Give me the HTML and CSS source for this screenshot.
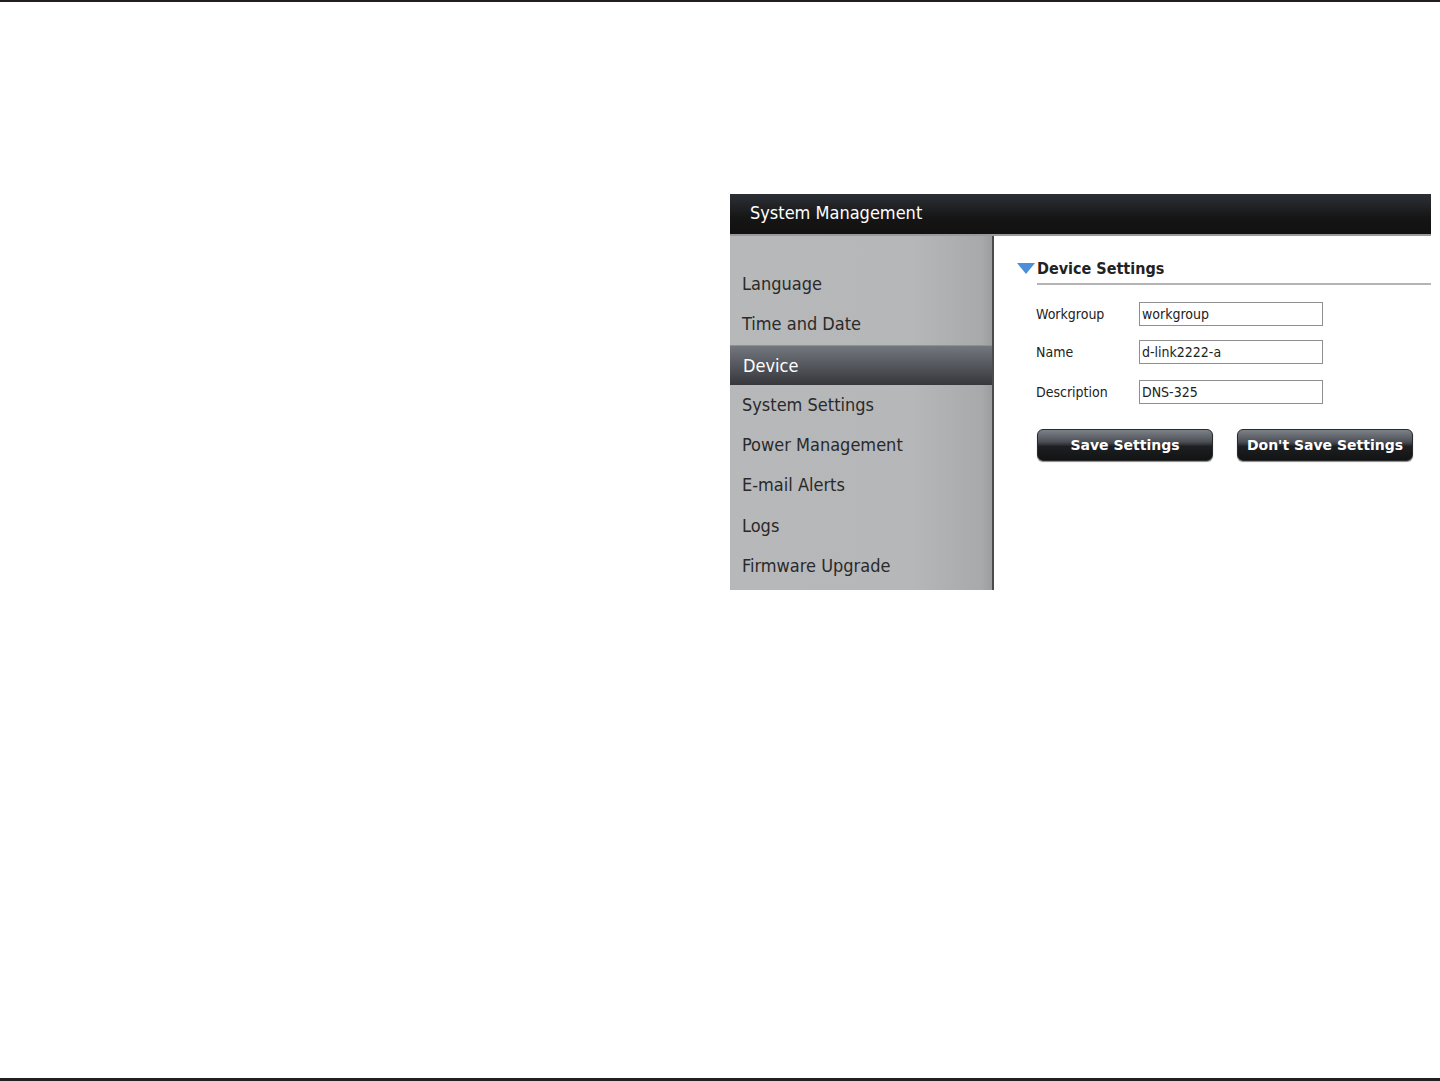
FILE: index.html
```html
<!DOCTYPE html>
<html lang="en">
<head>
    <meta charset="UTF-8">
    <title>System Management</title>
    <link rel="stylesheet" href="styles.css">
</head>
<body>
    <div class="page">
        <div class="panel">
            <div class="panel-header">System Management</div>
            <div class="panel-body">
                <ul class="side-menu">
                    <li>Language</li>
                    <li>Time and Date</li>
                    <li class="active">Device</li>
                    <li>System Settings</li>
                    <li>Power Management</li>
                    <li>E-mail Alerts</li>
                    <li>Logs</li>
                    <li>Firmware Upgrade</li>
                </ul>
                <div class="content">
                    <div class="section-title">
                        <span class="arrow"></span>
                        <span>Device Settings</span>
                    </div>
                    <div class="form">
                        <div class="form-row">
                            <label>Workgroup</label>
                            <input type="text" value="workgroup">
                        </div>
                        <div class="form-row">
                            <label>Name</label>
                            <input type="text" value="d-link2222-a">
                        </div>
                        <div class="form-row">
                            <label>Description</label>
                            <input type="text" value="DNS-325">
                        </div>
                    </div>
                    <div class="buttons">
                        <button class="btn">Save Settings</button>
                        <button class="btn">Don't Save Settings</button>
                    </div>
                </div>
            </div>
        </div>
    </div>
</body>
</html>
```
FILE: styles.css
```css
html, body {
    margin: 0;
    padding: 0;
}

body {
    font-family: Tahoma, "DejaVu Sans", sans-serif;
    background: #fff;
    width: 1440px;
    height: 1081px;
    overflow: hidden;
}

.page {
    height: 1081px;
    box-sizing: border-box;
    border-top: 2px solid #231f20;
    border-bottom: 3px solid #231f20;
    padding-top: 192px;
}

.panel {
    margin-left: 730px;
    width: 701px;
}

.panel-header {
    height: 40px;
    line-height: 38px;
    background: linear-gradient(#2c3036, #151515 60%, #111);
    border-bottom: 2px solid #9a9a9a;
    color: #fff;
    font-family: "DejaVu Sans Condensed", "DejaVu Sans", sans-serif;
    font-size: 18px;
    padding-left: 20px;
}

.panel-body {
    display: flex;
}

.side-menu {
    list-style: none;
    margin: 0;
    padding: 28px 0 4px 0;
    width: 262px;
    background: linear-gradient(to right, #b7b8ba, #b6b7b9 70%, #a8a9ab 96%, #9c9d9f);
    border-right: 2px solid #4a4b4d;
}

.side-menu li {
    height: 40.3px;
    line-height: 40px;
    padding-left: 12px;
    font-family: "DejaVu Sans Condensed", "DejaVu Sans", sans-serif;
    font-size: 18px;
    color: #2a2a2a;
}

.side-menu li.active {
    background: linear-gradient(#73777e, #54575d 50%, #36373c);
    border-top: 1px solid #8d9096;
    color: #fff;
    height: 39.3px;
    line-height: 39px;
    padding-left: 13px;
}

.content {
    flex: 1;
    padding: 21px 0 0 25px;
}

.section-title {
    display: flex;
    align-items: center;
    font-family: "DejaVu Sans Condensed", "DejaVu Sans", sans-serif;
    font-weight: bold;
    font-size: 16px;
    color: #222;
    height: 22px;
    padding-bottom: 4px;
    margin-left: -2px;
}

.arrow {
    width: 0;
    height: 0;
    border-left: 9px solid transparent;
    border-right: 9px solid transparent;
    border-top: 11px solid #4a8fd8;
    margin-right: 2px;
}

.form {
    margin-left: 18px;
    border-top: 2px solid #b4b4b4;
    padding-top: 17px;
}

.form-row {
    display: flex;
    align-items: center;
    height: 24px;
    margin-bottom: 14px;
    margin-left: -1px;
}

.form-row:nth-child(2) {
    margin-bottom: 16px;
}

.form-row label {
    width: 103px;
    font-family: "DejaVu Sans Condensed", "DejaVu Sans", sans-serif;
    font-size: 14px;
    color: #222;
}

.form-row input {
    width: 184px;
    height: 24px;
    box-sizing: border-box;
    border: 1px solid #8f8f8f;
    padding: 0 2px;
    font-family: "DejaVu Sans Condensed", "DejaVu Sans", sans-serif;
    font-size: 14px;
    color: #222;
    margin: 0;
}

.buttons {
    display: flex;
    gap: 24px;
    margin-left: 18px;
    margin-top: 25px;
}

.btn {
    width: 176px;
    height: 32px;
    border: 1px solid #2a2a2a;
    border-radius: 6px;
    background: linear-gradient(#7d8288, #4b4f55 40%, #1d1f22 55%, #121314);
    color: #fff;
    font-family: "DejaVu Sans", sans-serif;
    font-weight: bold;
    font-size: 14px;
    padding: 0;
    box-shadow: 0 1px 1px #888;
}
```
